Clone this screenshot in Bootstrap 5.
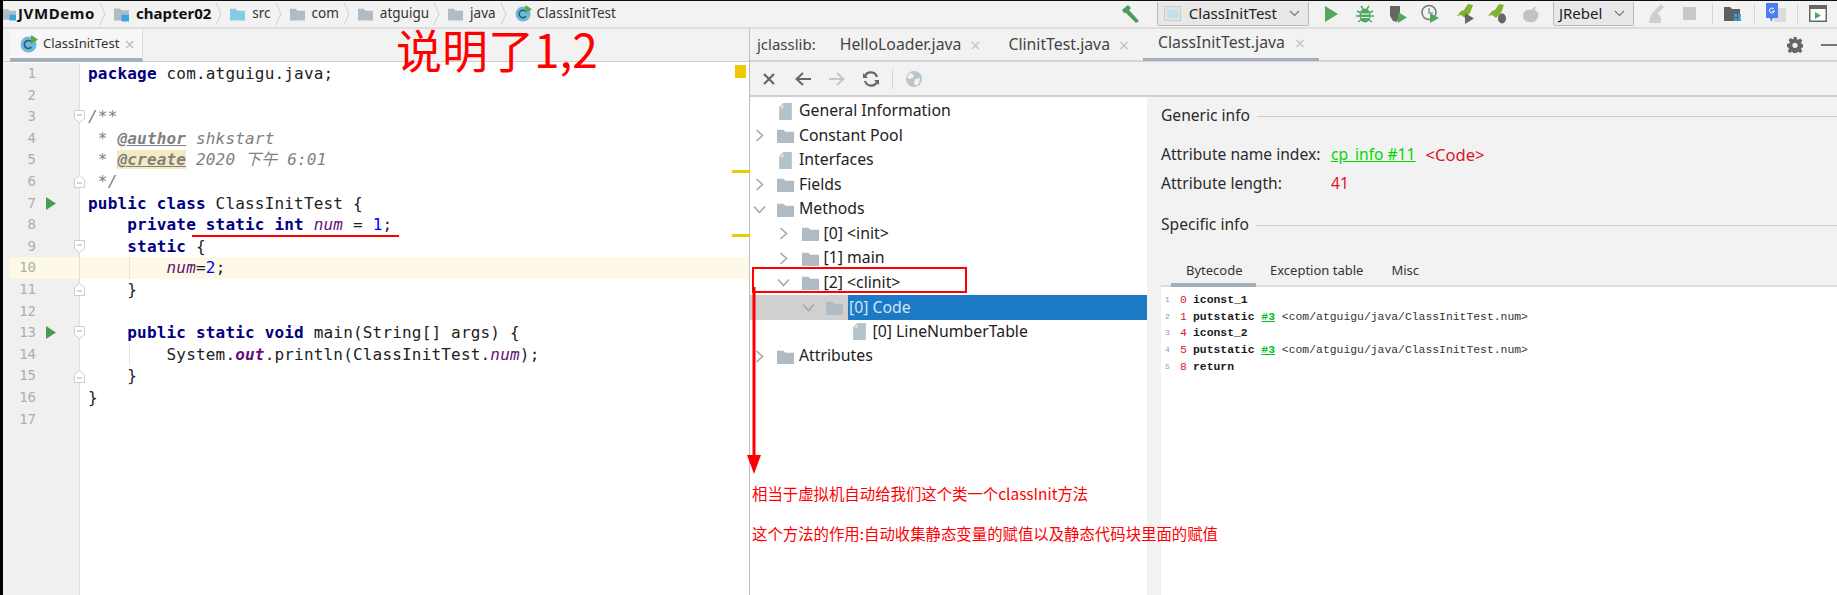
<!DOCTYPE html>
<html lang="zh-CN">
<head>
<meta charset="utf-8">
<title>ClassInitTest</title>
<link rel="stylesheet" href="https://cdn.jsdelivr.net/npm/bootstrap@5.3.0/dist/css/bootstrap.min.css">
<style>
html,body{height:100%;margin:0;overflow:hidden;}
body{background:#f2f2f2;color:#222;font-family:"Noto Sans","Noto Sans CJK SC",sans-serif;}
.defs{position:absolute;width:0;height:0;}
.shot{width:1837px;height:595px;position:relative;overflow:hidden;border-left:3px solid #000;}
.topbar{height:29px;border-top:1px solid #111;border-bottom:2px solid #dedede;font-size:13.500px;color:#333;}
.crumb{line-height:25px;white-space:nowrap;}
.crumb b{font-size:15px;font-weight:700;color:#111;}
.crumb svg.ic{width:15px;height:16px;margin-right:7px;}
.crumb svg.ic0{width:13px;height:16px;margin-right:2px;}
.crumb svg.ic1{width:17px;height:17px;margin-right:5px;}
.crumb svg.sep{width:7px;height:24px;margin:0 8px 0 4px;}
.jvm{letter-spacing:.6px;}
.fg{color:#b0bbc3}.fs{color:#84cbe6}
.runbar{height:25px;margin-right:-2px;}
.slot{width:33.300px;}
.slot svg{width:20px;height:20px;}
.combo{height:24px;background:#e8e8e8;border:1px solid #bababa;border-top:0;border-radius:0 0 2px 2px;font-size:15px;color:#222;}
.combo-a{width:152px;margin:0 6px 0 9px;padding-left:6px;}
.combo-b{width:81px;margin:0 6px 0 5px;padding-left:5px;}
.combo svg.chv{width:11px;height:7px;}
.vsep{width:1px;height:20px;background:#d4d4d4;}
.vs1{margin-left:5px;}
.hsl{width:41.500px;}
.work{height:566px;}
.lpane{width:746px;}
.ltabs{height:33px;padding-left:7px;border-bottom:1px solid #d0d0d0;position:relative;}
.ltab{width:133px;height:33px;background:#f7f7f7;border-bottom:4px solid #a6b0bb;font-size:13px;color:#333;padding-left:10px;gap:5px;border-right:1px solid #dedede;}
.ltab svg{width:18px;height:18px;}
.xmark{color:#bdbdbd;font-size:18px;line-height:18px;}
.code{background:#fff;height:533px;margin-left:7px;padding-top:1px;font:16px/21.600px "DejaVu Sans Mono","Noto Sans CJK SC",monospace;letter-spacing:.18px;color:#222;position:relative;}
.cl{height:21.600px;white-space:pre;}
.gt{width:70px;height:100%;background:#f0f0f0;border-right:1px solid #e0e0e0;color:#aeaeae;flex:none;font-size:14px;}
.gn{width:26px;text-align:right;letter-spacing:0;}
.gr{width:29px;padding-left:10px;}
.gr svg{width:10px;height:13px;display:block;}
.gf{margin-left:auto;margin-right:-6px;}
.gf svg{width:11px;height:13px;display:block;}
.cc{padding-left:8px;flex:1;height:100%;}
.cur,.cur .gt{background:#fdf9e6;}
.gd .cc{background:linear-gradient(#e4e4e4,#e4e4e4) 49px 0/1px 100% no-repeat;}
.kw{color:#000080;font-weight:700;}
.cm{color:#808080;font-style:italic;}
.tg{color:#808080;font-style:italic;font-weight:700;text-decoration:underline;}
.th{background:#f5ebc0;}
.nm{color:#00f;}
.fd{color:#660e7a;font-style:italic;}
.fb{color:#660e7a;font-style:italic;font-weight:700;}
.mk{position:absolute;background:#edc900;}
.mk1{left:725px;top:3px;width:11px;height:13px;}
.mk2{left:722px;top:108px;width:18px;height:3px;}
.mk3{left:722px;top:172px;width:18px;height:3px;}
.rpane{border-left:1px solid #bdbdbd;width:1088px;}
.rtabs{height:33px;border-bottom:2px solid #d4d4d4;font-size:15px;color:#444;padding-left:7px;position:relative;}
.rtabs .tt{white-space:nowrap;}
.jv{font-size:15.800px;}
.xs{width:14px;text-align:center;color:#c4c4c4;font-size:18px;line-height:18px;}
.xgap{margin-left:7px;margin-right:26px;}
.xgap2{margin-left:7px;margin-right:12px;}
.rtab-on{border-bottom:3px solid #a6b0bb;height:33px;padding:0 12px 0 15px;}
.gearmk{margin-right:18px;}
.tools{height:35px;border-bottom:2px solid #d0d0d0;padding-left:2px;}
.tools .slt{width:34px;}
.tools svg{width:18px;height:18px;}
.tree{width:397px;background:#fff;height:498px;padding-top:2px;font-size:15.800px;color:#222;flex:none;}
.tr{height:24.500px;white-space:nowrap;}
.d1{padding-left:24.500px}.d2{padding-left:49px}.d3{padding-left:73.500px}
.tc{width:18px;flex:none;}
.tc svg{width:9px;height:13px;display:block;margin:0 auto;}
.ti{width:31px;flex:none;padding-left:9px;}
.ti svg{width:17px;height:17px;display:block;}
.tf{color:#b0bbc3;}
.trs{background:#d0d0d0;}
.tts{background:#1b7ac3;color:#cfe4f5;flex:1;height:100%;line-height:24.500px;padding-left:1px;}
.tco{transform:rotate(90deg);}
.det{flex:1;height:498px;font-size:15.600px;color:#2a2a2a;padding-left:14px;}
.dh{height:30px;white-space:nowrap;gap:7px;flex:none;}
.dh1{margin-top:4px;}
.dh2{margin-top:11.500px;}
.dh i{flex:1;height:1px;background:#cdcdcd;}
.dv{height:29px;white-space:nowrap;flex:none;}
.dv1{margin-top:9.500px;}
.dl{width:170px;}
.gl{color:#00d800;text-decoration:underline;}
.rd{color:#e0141e;}
.rc{font-size:16.600px;margin-left:10px;}
.dtabs{height:37px;flex:none;border-bottom:2px solid #dcdcdc;margin-top:10px;font-size:13px;color:#333;padding-left:10px;}
.dt{padding:0 14px;line-height:40px;}
.dt-on{padding:0 15px;width:85px;height:37px;border-bottom:4px solid #a6b0bb;line-height:40px;}
.bc{background:#fff;flex:1;padding-top:5px;font:11.400px/16.650px "Liberation Mono",monospace;color:#1a1a1a;}
.br{white-space:pre;height:16.650px;}
.bn{width:19px;padding-left:4px;font-size:8px;color:#999;font-family:"Liberation Mono",monospace;flex:none;}
.bi{width:13px;color:#d9202a;flex:none;}
.bo{font-weight:700;}
.bg{color:#00c020;text-decoration:underline;font-weight:700;}
.bm{color:#333;}
.ov{position:absolute;color:#f00;}
.ov-title{left:393px;top:26px;font:46px/44px "Noto Sans CJK SC",sans-serif;white-space:nowrap;}
.ov-line{left:189px;top:235px;width:207px;height:2px;background:#f00;}
.ov-box{left:749px;top:267px;width:215px;height:26px;border:2px solid #f00;}
.ov-arrow{left:742px;top:287px;width:18px;height:188px;}
.ov-n1{left:749px;top:481px;font:15.400px/24px "Noto Sans CJK SC",sans-serif;white-space:nowrap;}
.ov-n2{left:749px;top:521px;font:15.400px/24px "Noto Sans CJK SC",sans-serif;white-space:nowrap;}
</style>
</head>
<body>
<svg class="defs" aria-hidden="true">
  <symbol id="fold" viewBox="0 0 16 16"><path fill="currentColor" d="M0 2.500h6l2 2h8V15H0z"/></symbol>
  <symbol id="file" viewBox="0 0 16 16"><path fill="#b6c2ca" d="M6 0h8v16H2V4z"/><path fill="#dfe5e9" d="M6 1v4H3z"/></symbol>
  <symbol id="mod" viewBox="0 0 16 16"><path fill="#b0bbc3" d="M0 2h6l2 2h8v11H0z"/><rect x="8" y="9" width="8" height="7" fill="#3aa5dc"/></symbol>
  <symbol id="cls" viewBox="0 0 18 18"><circle cx="8.500" cy="9.500" r="8" fill="#6dbbdc"/><path d="M11.500 7a4 4 0 1 0 0 5" fill="none" stroke="#35566b" stroke-width="1.600"/><path fill="#5aa843" d="M11 0l7 4.500-7 4.500z"/></symbol>
  <symbol id="chev" viewBox="0 0 9 13"><path d="M1.500 1l6 5.500-6 5.500" fill="none" stroke="#a8a8a8" stroke-width="1.600"/></symbol>
  <symbol id="sepc" viewBox="0 0 7 24"><path d="M1 1l5 11-5 11" fill="none" stroke="#cfcfcf"/></symbol>
  <symbol id="dn" viewBox="0 0 11 7"><path d="M1 1l4.500 4.500L10 1" fill="none" stroke="#777" stroke-width="1.200"/></symbol>
  <symbol id="fo" viewBox="0 0 11 13"><path d="M.5.500h10v8l-5 4-5-4z" fill="#fff" stroke="#cfcfcf"/><path d="M3 5h5" stroke="#aaa"/></symbol>
  <symbol id="fc" viewBox="0 0 11 13"><path d="M.5 12.500h10v-8l-5-4-5 4z" fill="#fff" stroke="#cfcfcf"/><path d="M3 8h5" stroke="#aaa"/></symbol>
  <symbol id="rn" viewBox="0 0 10 13"><path fill="#499c54" d="M0 0l10 6.500L0 13z"/></symbol>
</svg>
<div class="shot d-flex flex-column">
  <div class="topbar d-flex align-items-start">
    <div class="crumb d-flex align-items-center">
      <svg class="ic0"><use href="#mod"/></svg><b class="jvm">JVMDemo</b><svg class="sep"><use href="#sepc"/></svg>
      <svg class="ic"><use href="#mod"/></svg><b>chapter02</b><svg class="sep"><use href="#sepc"/></svg>
      <svg class="ic fs"><use href="#fold"/></svg><span>src</span><svg class="sep"><use href="#sepc"/></svg>
      <svg class="ic fg"><use href="#fold"/></svg><span>com</span><svg class="sep"><use href="#sepc"/></svg>
      <svg class="ic fg"><use href="#fold"/></svg><span>atguigu</span><svg class="sep"><use href="#sepc"/></svg>
      <svg class="ic fg"><use href="#fold"/></svg><span>java</span><svg class="sep"><use href="#sepc"/></svg>
      <svg class="ic1"><use href="#cls"/></svg><span>ClassInitTest</span>
    </div>
    <div class="runbar ms-auto d-flex align-items-center">
      <span class="slot d-flex justify-content-center"><svg viewBox="0 0 20 20"><path fill="#4f9b5a" d="M1 6l6-5 3 3-2 2 10 11-3 2L5 9 3 9z"/></svg></span>
      <div class="combo combo-a d-flex align-items-center"><svg width="17" height="17" viewBox="0 0 17 17" class="me-2"><rect x=".5" y="1.500" width="16" height="14" fill="#dfe4e8" stroke="#ccc"/><rect x="3" y="5" width="11" height="8" fill="#c3dfe9"/></svg><span>ClassInitTest</span><svg class="chv ms-auto me-2"><use href="#dn"/></svg></div>
      <span class="slot d-flex justify-content-center"><svg viewBox="0 0 20 20"><path fill="#4fa85e" d="M4 2l13 8-13 8z"/></svg></span>
      <span class="slot d-flex justify-content-center"><svg viewBox="0 0 20 20"><ellipse cx="10" cy="11.500" rx="5.500" ry="7" fill="#4fa85e"/><path d="M2 7l4 2M18 7l-4 2M1 12h5M19 12h-5M3 18l4-3M17 18l-4-3M6 2l2 3M14 2l-2 3" stroke="#4fa85e" stroke-width="1.500"/><path d="M6 10h8M6 13.500h8" stroke="#fff"/></svg></span>
      <span class="slot d-flex justify-content-center"><svg viewBox="0 0 20 20"><path fill="#666" d="M2 2h10v8l-3 8-4-1-3-5z"/><path fill="#4fa85e" d="M10 8l9 5.500-9 5.500z"/></svg></span>
      <span class="slot d-flex justify-content-center"><svg viewBox="0 0 20 20"><circle cx="8" cy="8.500" r="7" fill="none" stroke="#777" stroke-width="1.500"/><path d="M8 4v5h4" fill="none" stroke="#777" stroke-width="1.200"/><path fill="#4fa85e" d="M9 9l9 5-9 5z"/></svg></span>
      <span class="slot d-flex justify-content-center"><svg viewBox="0 0 20 20"><path fill="#7fb32e" d="M13 0l5 1-3 8-5 5-4-3-4 1 4-5 3-1z"/><path fill="#666" d="M10 9l9 5.500L10 20z"/></svg></span>
      <span class="slot d-flex justify-content-center"><svg viewBox="0 0 20 20"><path fill="#7fb32e" d="M11 0l5 1-3 8-5 5-4-3-4 1 4-5 3-1z"/><ellipse cx="14" cy="14.500" rx="4" ry="5" fill="#666"/></svg></span>
      <span class="slot d-flex justify-content-center"><svg viewBox="0 0 20 20"><path fill="#c2c2c2" d="M2 12c0-5 4-7 8-6 2-1 3-4 5-3 0 1-1 2-2 3 4 1 5 4 4 7-1 4-5 6-8 5-4 0-7-2-7-6z"/></svg></span>
      <div class="combo combo-b d-flex align-items-center"><span>JRebel</span><svg class="chv ms-auto me-2"><use href="#dn"/></svg></div>
      <span class="slot d-flex justify-content-center"><svg viewBox="0 0 20 20"><path fill="#cfcfcf" d="M14 0l3 3-6 6 3 5v5H2l1-5 2-5z"/></svg></span>
      <span class="slot d-flex justify-content-center"><svg viewBox="0 0 20 20"><rect x="3" y="3" width="13" height="13" fill="#c8c8c8"/></svg></span>
      <span class="vsep vs1"></span>
      <span class="hsl d-flex justify-content-center"><svg width="20" height="20" viewBox="0 0 20 20"><path fill="#5c6063" d="M1 3h6l2 2h8v12H1z"/><path fill="#38a0e0" d="M11 10h3v3h-3zM15 10h3v3h-3zM11 14h3v3h-3zM15 14h3v3h-3z"/></svg></span>
      <span class="vsep"></span>
      <span class="hsl d-flex justify-content-center"><svg width="22" height="22" viewBox="0 0 22 22"><rect x="9" y="5" width="12" height="14" fill="#dcdcdc"/><path fill="#4a80ee" d="M1 0h12v15H8l-2 4-1-4H1z"/><path d="M9 6a2.500 2.500 0 1 0 .5 2H7" fill="none" stroke="#fff"/></svg></span>
      <span class="vsep"></span>
      <span class="hsl d-flex justify-content-center"><svg width="18" height="18" viewBox="0 0 18 18"><rect x=".75" y=".75" width="16.500" height="15.500" fill="#fff" stroke="#666" stroke-width="1.500"/><rect x="1" y="1" width="16" height="3" fill="#666"/><path fill="#4fa85e" d="M6 7l6 3.500-6 3.500z"/></svg></span>
    </div>
  </div>
  <div class="work d-flex">
    <section class="lpane">
      <div class="ltabs d-flex">
        <div class="ltab d-flex align-items-center"><svg><use href="#cls"/></svg><span>ClassInitTest</span><span class="xmark">×</span></div>
      </div>
      <div class="code">
        <span class="mk mk1"></span><span class="mk mk2"></span><span class="mk mk3"></span>
        <div class="cl d-flex"><div class="gt d-flex"><span class="gn">1</span></div><div class="cc"><span class="kw">package</span> com.atguigu.java;</div></div>
        <div class="cl d-flex"><div class="gt d-flex"><span class="gn">2</span></div><div class="cc"></div></div>
        <div class="cl d-flex"><div class="gt d-flex align-items-center"><span class="gn">3</span><span class="gf"><svg><use href="#fo"/></svg></span></div><div class="cc"><span class="cm">/**</span></div></div>
        <div class="cl d-flex"><div class="gt d-flex"><span class="gn">4</span></div><div class="cc"><span class="cm"> * </span><span class="tg">@author</span><span class="cm"> shkstart</span></div></div>
        <div class="cl d-flex"><div class="gt d-flex"><span class="gn">5</span></div><div class="cc"><span class="cm"> * </span><span class="tg th">@create</span><span class="cm"> 2020 下午 6:01</span></div></div>
        <div class="cl d-flex"><div class="gt d-flex align-items-center"><span class="gn">6</span><span class="gf"><svg><use href="#fc"/></svg></span></div><div class="cc"><span class="cm"> */</span></div></div>
        <div class="cl d-flex"><div class="gt d-flex align-items-center"><span class="gn">7</span><span class="gr"><svg><use href="#rn"/></svg></span></div><div class="cc"><span class="kw">public class</span> ClassInitTest {</div></div>
        <div class="cl d-flex"><div class="gt d-flex"><span class="gn">8</span></div><div class="cc">    <span class="kw">private static int</span> <span class="fd">num</span> = <span class="nm">1</span>;</div></div>
        <div class="cl d-flex"><div class="gt d-flex align-items-center"><span class="gn">9</span><span class="gf"><svg><use href="#fo"/></svg></span></div><div class="cc">    <span class="kw">static</span> {</div></div>
        <div class="cl cur gd d-flex"><div class="gt d-flex"><span class="gn">10</span></div><div class="cc">        <span class="fd">num</span>=<span class="nm">2</span>;</div></div>
        <div class="cl d-flex"><div class="gt d-flex align-items-center"><span class="gn">11</span><span class="gf"><svg><use href="#fc"/></svg></span></div><div class="cc">    }</div></div>
        <div class="cl d-flex"><div class="gt d-flex"><span class="gn">12</span></div><div class="cc"></div></div>
        <div class="cl d-flex"><div class="gt d-flex align-items-center"><span class="gn">13</span><span class="gr"><svg><use href="#rn"/></svg></span><span class="gf"><svg><use href="#fo"/></svg></span></div><div class="cc">    <span class="kw">public static void</span> main(String[] args) {</div></div>
        <div class="cl gd d-flex"><div class="gt d-flex"><span class="gn">14</span></div><div class="cc">        System.<span class="fb">out</span>.println(ClassInitTest.<span class="fd">num</span>);</div></div>
        <div class="cl d-flex"><div class="gt d-flex align-items-center"><span class="gn">15</span><span class="gf"><svg><use href="#fc"/></svg></span></div><div class="cc">    }</div></div>
        <div class="cl d-flex"><div class="gt d-flex"><span class="gn">16</span></div><div class="cc">}</div></div>
        <div class="cl d-flex"><div class="gt d-flex"><span class="gn">17</span></div><div class="cc"></div></div>
        <div class="gt"></div>
      </div>
    </section>
    <section class="rpane d-flex flex-column">
      <div class="rtabs d-flex align-items-center">
        <span class="tt me-4">jclasslib:</span>
        <span class="tt jv">HelloLoader.java</span><span class="xs xgap">×</span>
        <span class="tt jv">ClinitTest.java</span><span class="xs xgap2">×</span>
        <span class="rtab-on d-flex align-items-center"><span class="tt jv">ClassInitTest.java</span><span class="xs ms-2">×</span></span>
        <svg class="ms-auto gearmk" width="16" height="16" viewBox="0 0 16 16"><path fill="#666" d="M6.500 0h3l.4 2.200 1.400.6L13.200 1.500l2.100 2.100-1.300 1.900.6 1.400 2.200.4v3l-2.200.4-.6 1.400 1.300 1.900-2.100 2.100-1.900-1.300-1.400.6-.4 2.200h-3l-.4-2.200-1.400-.6-1.900 1.300-2.100-2.100 1.300-1.900-.6-1.400L0 9.800v-3l2.200-.4.6-1.400-1.300-1.900 2.100-2.100 1.900 1.300 1.400-.6z"/><circle cx="8" cy="8.300" r="2.600" fill="#f2f2f2"/></svg>
        <svg width="16" height="2" viewBox="0 0 16 2" class="d-block"><rect width="16" height="2" fill="#777"/></svg>
      </div>
      <div class="tools d-flex align-items-center">
        <span class="slt d-flex justify-content-center"><svg viewBox="0 0 18 18"><path d="M4 4l10 10M14 4L4 14" stroke="#666" stroke-width="2.200"/></svg></span>
        <span class="slt d-flex justify-content-center"><svg viewBox="0 0 18 18"><path d="M17 9H3M9 3L2.500 9 9 15" fill="none" stroke="#666" stroke-width="2"/></svg></span>
        <span class="slt d-flex justify-content-center"><svg viewBox="0 0 18 18"><path d="M1 9h14M9 3l6.500 6L9 15" fill="none" stroke="#c6c6c6" stroke-width="2"/></svg></span>
        <span class="slt d-flex justify-content-center"><svg viewBox="0 0 18 18"><path d="M15 7A6.500 6.500 0 0 0 3 6M3 11a6.500 6.500 0 0 0 12 1" fill="none" stroke="#666" stroke-width="2.200"/><path fill="#666" d="M1 3v5h5zM17 15v-5h-5z"/></svg></span>
        <span class="vsep ms-1"></span>
        <span class="slt ms-1 d-flex justify-content-center"><svg viewBox="0 0 18 18"><circle cx="9" cy="9" r="8" fill="#b9c4cb"/><path fill="#f2f2f2" d="M5 3l4 2-1 3-4 1-2-2zM10 9l5-1-1 5-3 3-2-3z"/></svg></span>
      </div>
      <div class="d-flex">
        <div class="tree">
          <div class="tr d-flex align-items-center"><span class="tc"></span><span class="ti"><svg><use href="#file"/></svg></span><span>General Information</span></div>
          <div class="tr d-flex align-items-center"><span class="tc"><svg><use href="#chev"/></svg></span><span class="ti tf"><svg><use href="#fold"/></svg></span><span>Constant Pool</span></div>
          <div class="tr d-flex align-items-center"><span class="tc"></span><span class="ti"><svg><use href="#file"/></svg></span><span>Interfaces</span></div>
          <div class="tr d-flex align-items-center"><span class="tc"><svg><use href="#chev"/></svg></span><span class="ti tf"><svg><use href="#fold"/></svg></span><span>Fields</span></div>
          <div class="tr d-flex align-items-center"><span class="tc"><svg class="tco"><use href="#chev"/></svg></span><span class="ti tf"><svg><use href="#fold"/></svg></span><span>Methods</span></div>
          <div class="tr d1 d-flex align-items-center"><span class="tc"><svg><use href="#chev"/></svg></span><span class="ti tf"><svg><use href="#fold"/></svg></span><span>[0] &lt;init&gt;</span></div>
          <div class="tr d1 d-flex align-items-center"><span class="tc"><svg><use href="#chev"/></svg></span><span class="ti tf"><svg><use href="#fold"/></svg></span><span>[1] main</span></div>
          <div class="tr d1 d-flex align-items-center"><span class="tc"><svg class="tco"><use href="#chev"/></svg></span><span class="ti tf"><svg><use href="#fold"/></svg></span><span>[2] &lt;clinit&gt;</span></div>
          <div class="tr d2 trs d-flex align-items-center"><span class="tc"><svg class="tco"><use href="#chev"/></svg></span><span class="ti tf"><svg><use href="#fold"/></svg></span><span class="tts">[0] Code</span></div>
          <div class="tr d3 d-flex align-items-center"><span class="tc"></span><span class="ti"><svg><use href="#file"/></svg></span><span>[0] LineNumberTable</span></div>
          <div class="tr d-flex align-items-center"><span class="tc"><svg><use href="#chev"/></svg></span><span class="ti tf"><svg><use href="#fold"/></svg></span><span>Attributes</span></div>
        </div>
        <div class="det d-flex flex-column">
          <div class="dh dh1 d-flex align-items-center"><span>Generic info</span><i></i></div>
          <div class="dv dv1 d-flex align-items-center"><span class="dl">Attribute name index:</span><span class="gl">cp_info #11</span><span class="rd rc">&lt;Code&gt;</span></div>
          <div class="dv d-flex align-items-center"><span class="dl">Attribute length:</span><span class="rd">41</span></div>
          <div class="dh dh2 d-flex align-items-center"><span>Specific info</span><i></i></div>
          <div class="dtabs d-flex align-items-start"><span class="dt-on">Bytecode</span><span class="dt">Exception table</span><span class="dt">Misc</span></div>
          <div class="bc">
            <div class="br d-flex"><span class="bn">1</span><span class="bi">0</span><span class="bo">iconst_1</span></div>
            <div class="br d-flex"><span class="bn">2</span><span class="bi">1</span><span class="bo">putstatic </span><span class="bg">#3</span><span class="bm"> &lt;com/atguigu/java/ClassInitTest.num&gt;</span></div>
            <div class="br d-flex"><span class="bn">3</span><span class="bi">4</span><span class="bo">iconst_2</span></div>
            <div class="br d-flex"><span class="bn">4</span><span class="bi">5</span><span class="bo">putstatic </span><span class="bg">#3</span><span class="bm"> &lt;com/atguigu/java/ClassInitTest.num&gt;</span></div>
            <div class="br d-flex"><span class="bn">5</span><span class="bi">8</span><span class="bo">return</span></div>
          </div>
        </div>
      </div>
    </section>
  </div>
  <div class="ov ov-title">说明了1,2</div>
  <div class="ov ov-line"></div>
  <div class="ov ov-box"></div>
  <svg class="ov ov-arrow" viewBox="0 0 18 188"><rect x="7.500" y="0" width="3" height="172" fill="#f00"/><path fill="#f00" d="M2 168h14l-7 19z"/></svg>
  <div class="ov ov-n1">相当于虚拟机自动给我们这个类一个classInit方法</div>
  <div class="ov ov-n2">这个方法的作用:自动收集静态变量的赋值以及静态代码块里面的赋值</div>
</div>
<script src="https://cdn.jsdelivr.net/npm/bootstrap@5.3.0/dist/js/bootstrap.bundle.min.js"></script>
</body>
</html>
